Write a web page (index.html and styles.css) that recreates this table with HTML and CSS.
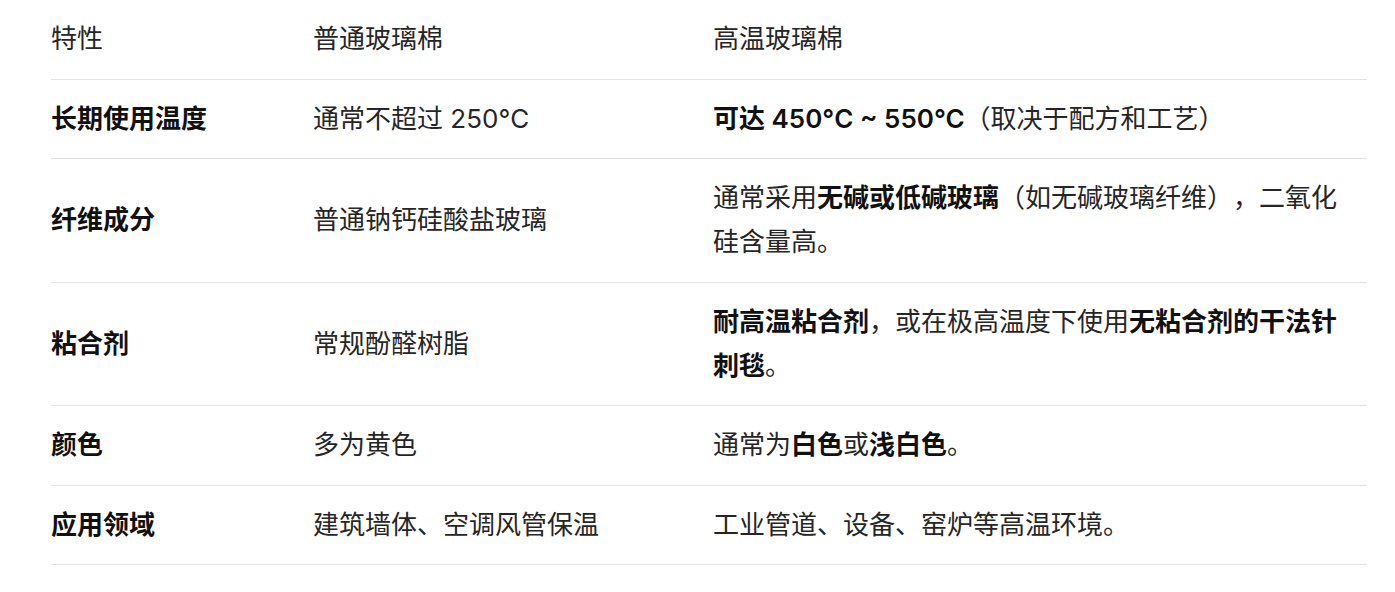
FILE: index.html
```html
<!DOCTYPE html>
<html lang="zh-CN">
<head>
<meta charset="utf-8">
<title>普通玻璃棉与高温玻璃棉对比</title>
<link rel="stylesheet" href="styles.css">
</head>
<body>
<div class="page">
  <table class="compare">
    <colgroup>
      <col class="c1">
      <col class="c2">
      <col class="c3">
    </colgroup>
    <thead>
      <tr>
        <th>特性</th>
        <th>普通玻璃棉</th>
        <th>高温玻璃棉</th>
      </tr>
    </thead>
    <tbody>
      <tr>
        <td><strong>长期使用温度</strong></td>
        <td>通常不超过 250°C</td>
        <td><strong>可达 450°C ~ 550°C</strong>（取决于配方和工艺）</td>
      </tr>
      <tr>
        <td><strong>纤维成分</strong></td>
        <td>普通钠钙硅酸盐玻璃</td>
        <td>通常采用<strong>无碱或低碱玻璃</strong>（如无碱玻璃纤维），二氧化硅含量高。</td>
      </tr>
      <tr>
        <td><strong>粘合剂</strong></td>
        <td>常规酚醛树脂</td>
        <td><strong>耐高温粘合剂</strong>，或在极高温度下使用<strong>无粘合剂的干法针刺毯</strong>。</td>
      </tr>
      <tr>
        <td><strong>颜色</strong></td>
        <td>多为黄色</td>
        <td>通常为<strong>白色</strong>或<strong>浅白色</strong>。</td>
      </tr>
      <tr>
        <td><strong>应用领域</strong></td>
        <td>建筑墙体、空调风管保温</td>
        <td>工业管道、设备、窑炉等高温环境。</td>
      </tr>
    </tbody>
  </table>
</div>
</body>
</html>
```

FILE: styles.css
```css
html, body {
  margin: 0;
  padding: 0;
  background: #ffffff;
}

.page {
  padding-left: 51px;
}

.compare {
  width: 1316px;
  border-collapse: collapse;
  table-layout: fixed;
  font-family: "Inter", "Noto Sans CJK SC", sans-serif;
  font-size: 26px;
  line-height: 44px;
  color: #262626;
  text-spacing-trim: space-all;
}

.compare .c1 { width: 262px; }
.compare .c2 { width: 400px; }
.compare .c3 { width: 654px; }

.compare th,
.compare td {
  padding: 17.25px 16px 17.25px 0;
  text-align: left;
  vertical-align: middle;
  font-weight: 400;
  border-bottom: 1px solid #e3e3e3;
}

.compare strong {
  font-weight: 600;
  color: #111111;
}
```
